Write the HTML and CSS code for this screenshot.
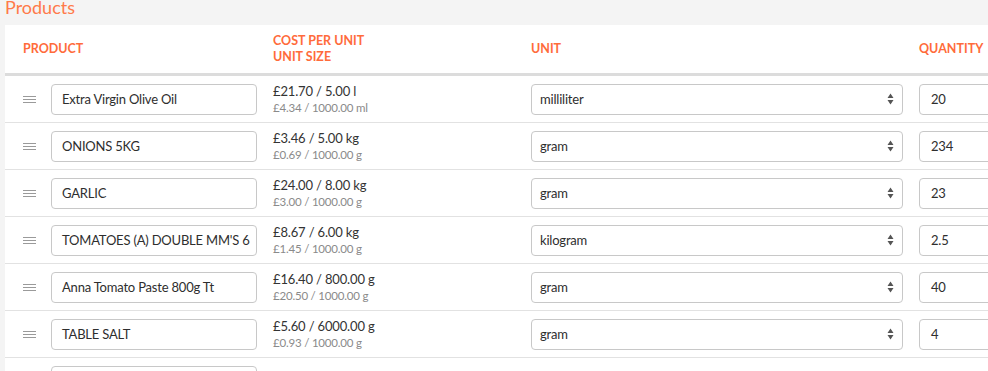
FILE: index.html
```html
<!DOCTYPE html>
<html>
<head>
<meta charset="utf-8">
<link rel="stylesheet" href="styles.css">
</head>
<body>
<h2 class="title">Products</h2>
<div class="card">
  <div class="row head">
    <div class="c-product">PRODUCT</div>
    <div class="c-cost">COST PER UNIT<br>UNIT SIZE</div>
    <div class="c-unit">UNIT</div>
    <div class="c-qty">QUANTITY</div>
  </div>

  <div class="row">
    <div class="c-handle"><span class="handle"></span></div>
    <div class="c-input"><div class="field">Extra Virgin Olive Oil</div></div>
    <div class="c-cost"><div class="main">£21.70 / 5.00 l</div><div class="sub">£4.34 / 1000.00 ml</div></div>
    <div class="c-unit"><div class="select">milliliter<svg class="arrows" width="7" height="12" viewBox="0 0 7 12"><path d="M3.5 0.5L6.5 5H0.5Z M3.5 11.5L6.5 7H0.5Z" fill="#555"/></svg></div></div>
    <div class="c-qty"><div class="field qty">20</div></div>
  </div>

  <div class="row">
    <div class="c-handle"><span class="handle"></span></div>
    <div class="c-input"><div class="field">ONIONS 5KG</div></div>
    <div class="c-cost"><div class="main">£3.46 / 5.00 kg</div><div class="sub">£0.69 / 1000.00 g</div></div>
    <div class="c-unit"><div class="select">gram<svg class="arrows" width="7" height="12" viewBox="0 0 7 12"><path d="M3.5 0.5L6.5 5H0.5Z M3.5 11.5L6.5 7H0.5Z" fill="#555"/></svg></div></div>
    <div class="c-qty"><div class="field qty">234</div></div>
  </div>

  <div class="row">
    <div class="c-handle"><span class="handle"></span></div>
    <div class="c-input"><div class="field">GARLIC</div></div>
    <div class="c-cost"><div class="main">£24.00 / 8.00 kg</div><div class="sub">£3.00 / 1000.00 g</div></div>
    <div class="c-unit"><div class="select">gram<svg class="arrows" width="7" height="12" viewBox="0 0 7 12"><path d="M3.5 0.5L6.5 5H0.5Z M3.5 11.5L6.5 7H0.5Z" fill="#555"/></svg></div></div>
    <div class="c-qty"><div class="field qty">23</div></div>
  </div>

  <div class="row">
    <div class="c-handle"><span class="handle"></span></div>
    <div class="c-input"><div class="field">TOMATOES (A) DOUBLE MM'S 6</div></div>
    <div class="c-cost"><div class="main">£8.67 / 6.00 kg</div><div class="sub">£1.45 / 1000.00 g</div></div>
    <div class="c-unit"><div class="select">kilogram<svg class="arrows" width="7" height="12" viewBox="0 0 7 12"><path d="M3.5 0.5L6.5 5H0.5Z M3.5 11.5L6.5 7H0.5Z" fill="#555"/></svg></div></div>
    <div class="c-qty"><div class="field qty">2.5</div></div>
  </div>

  <div class="row">
    <div class="c-handle"><span class="handle"></span></div>
    <div class="c-input"><div class="field">Anna Tomato Paste 800g Tt</div></div>
    <div class="c-cost"><div class="main">£16.40 / 800.00 g</div><div class="sub">£20.50 / 1000.00 g</div></div>
    <div class="c-unit"><div class="select">gram<svg class="arrows" width="7" height="12" viewBox="0 0 7 12"><path d="M3.5 0.5L6.5 5H0.5Z M3.5 11.5L6.5 7H0.5Z" fill="#555"/></svg></div></div>
    <div class="c-qty"><div class="field qty">40</div></div>
  </div>

  <div class="row">
    <div class="c-handle"><span class="handle"></span></div>
    <div class="c-input"><div class="field">TABLE SALT</div></div>
    <div class="c-cost"><div class="main">£5.60 / 6000.00 g</div><div class="sub">£0.93 / 1000.00 g</div></div>
    <div class="c-unit"><div class="select">gram<svg class="arrows" width="7" height="12" viewBox="0 0 7 12"><path d="M3.5 0.5L6.5 5H0.5Z M3.5 11.5L6.5 7H0.5Z" fill="#555"/></svg></div></div>
    <div class="c-qty"><div class="field qty">4</div></div>
  </div>

  <div class="row">
    <div class="c-handle"><span class="handle"></span></div>
    <div class="c-input"><div class="field">&nbsp;</div></div>
    <div class="c-cost"></div>
    <div class="c-unit"></div>
    <div class="c-qty"></div>
  </div>
</div>
</body>
</html>
```

FILE: styles.css
```css
html, body {
  margin: 0;
  padding: 0;
  background: #f4f4f4;
  overflow: hidden;
  font-family: Lato, "Open Sans", sans-serif;
  color: #333;
}

.title {
  margin: -3px 0 8px 5px;
  height: 20px;
  line-height: 20px;
  font-size: 18px;
  font-weight: 400;
  color: #ff7a4a;
}

.card {
  margin-left: 5px;
  width: 1100px;
  background: #fff;
}

.row {
  display: grid;
  grid-template-columns: 46px 222px 258px 388px 186px;
  align-items: center;
  height: 46px;
  border-bottom: 1px solid #e2e2e2;
}

.row.head {
  grid-template-columns: 268px 258px 388px 186px;
  height: 48px;
  border-bottom: 3px solid #dcdcdc;
  font-size: 12.5px;
  font-weight: 700;
  color: #ff6b3b;
  line-height: 16px;
}

.head .c-product {
  padding-left: 18px;
}

.c-handle {
  padding-left: 18px;
}

.handle {
  display: block;
  width: 13px;
  height: 5px;
  border-top: 1px solid #9a9a9a;
  border-bottom: 1px solid #9a9a9a;
  position: relative;
}

.handle::after {
  content: "";
  position: absolute;
  left: 0;
  right: 0;
  top: 2px;
  border-top: 1px solid #9a9a9a;
}

.c-input {
  padding-right: 16px;
}

.field {
  box-sizing: border-box;
  height: 31px;
  border: 1px solid #c8c8c8;
  border-radius: 4px;
  padding: 0 10px;
  font-size: 13px;
  letter-spacing: -0.2px;
  line-height: 29px;
  color: #2e2e2e;
  white-space: nowrap;
  overflow: hidden;
}

.c-cost .main {
  font-size: 13px;
  letter-spacing: -0.15px;
  line-height: 17px;
  color: #333;
}

.c-cost .sub {
  font-size: 11.5px;
  letter-spacing: -0.2px;
  line-height: 15px;
  color: #8a8a8a;
}

.c-unit {
  padding-right: 16px;
}

.select {
  box-sizing: border-box;
  height: 31px;
  border: 1px solid #c8c8c8;
  border-radius: 4px;
  padding: 0 8px;
  font-size: 13px;
  letter-spacing: -0.2px;
  line-height: 29px;
  color: #2e2e2e;
  display: flex;
  justify-content: space-between;
  align-items: center;
}

.arrows {
  display: block;
}

.qty {
  padding-left: 11px;
}
```
